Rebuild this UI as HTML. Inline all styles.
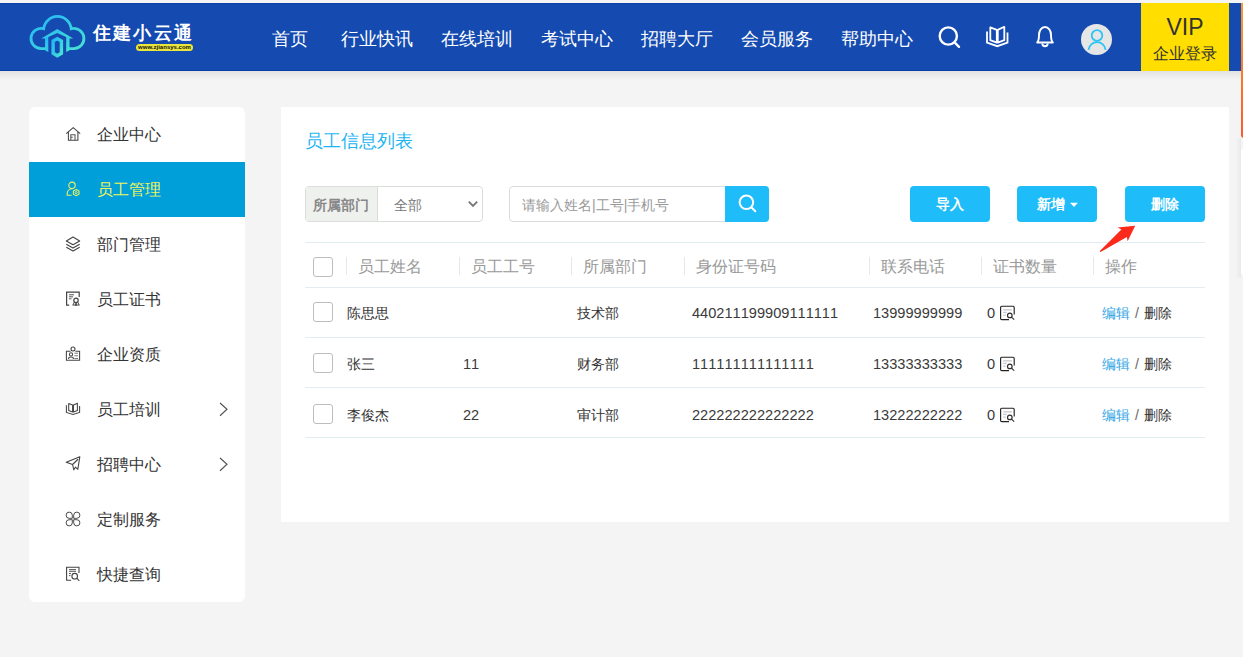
<!DOCTYPE html>
<html><head><meta charset="utf-8">
<style>
*{margin:0;padding:0;box-sizing:border-box}
html,body{width:1243px;height:657px;overflow:hidden;background:#f4f4f4;font-family:"Liberation Sans",sans-serif;color:#333}
.a{position:absolute}
.t{position:absolute;white-space:nowrap}
#hdr{left:0;top:3px;width:1243px;height:68px;background:#154bb0}
#topstrip{left:0;top:0;width:1243px;height:3px;background:#f5f5f5}
#shadow{left:0;top:71px;width:1243px;height:9px;background:linear-gradient(#e2e2e2,#f4f4f4)}
.nav{font-size:18px;color:#fff;top:27px;line-height:24px}
#vip{left:1141px;top:3px;width:88px;height:68px;background:#ffde00}
#side{left:29px;top:107px;width:216px;height:495px;background:#fff;border-radius:6px;overflow:hidden}
.si{position:absolute;left:0;width:216px;height:55px}
.si .tx{position:absolute;left:68px;top:18px;font-size:16px;line-height:20px;color:#333;white-space:nowrap}
.si svg{position:absolute;left:36px;top:19px}
.si.on{background:#009fda}
.si.on .tx{color:#f0f55a}
#main{left:281px;top:107px;width:948px;height:415px;background:#fff}
.hd{font-size:16px;color:#999;line-height:20px}
.sep{position:absolute;width:1px;height:18px;top:257px;background:#e8e8e8}
.hl{position:absolute;left:305px;width:900px;height:1px;background:#e1edf3}
.cb{position:absolute;left:313px;width:20px;height:20px;border:1px solid #bdbdbd;border-radius:3px;background:#fff}
.cell{font-size:14px;color:#333;line-height:18px}
.num{font-size:14.6px;font-kerning:none;color:#3a3a3a}
.btn{position:absolute;top:186px;width:80px;height:36px;background:#1ebcf8;border-radius:4px;color:#fff;font-size:14px;font-weight:bold;text-align:center;line-height:36px}
</style></head><body>
<div class="a" id="topstrip"></div>
<div class="a" id="hdr"></div>
<div class="a" id="shadow"></div>
<div class="a" style="left:0;top:3px;width:1141px;height:1px;background:#0c40aa"></div>
<div class="a" style="left:0;top:70px;width:1141px;height:1px;background:#0a3ca8"></div>

<!-- logo -->
<svg class="a" style="left:26px;top:10px" width="64" height="52" viewBox="0 0 64 52">
<defs><linearGradient id="lg" x1="0" y1="0" x2="1" y2="1"><stop offset="0" stop-color="#22b6f6"/><stop offset="1" stop-color="#48e3d3"/></linearGradient></defs>
<path d="M21 38.6 L15.1 38.6 A10.1 10.1 0 1 1 17.69 18.74 A13.85 13.85 0 0 1 45.21 18.74 A10.1 10.1 0 1 1 47.8 38.6 L42 38.6" fill="none" stroke="url(#lg)" stroke-width="2.8"/>
<path d="M15.3 28.6 L31.25 19 L47.2 28.6 L43.6 28.6 L31.25 22.9 L18.9 28.6 Z" fill="url(#lg)"/>
<path d="M19 27 L22.3 27 L22.3 42 L19 40.3 Z M40.2 27 L43.5 27 L43.5 40.3 L40.2 42 Z" fill="url(#lg)"/>
<path d="M31.25 28.6 L35.4 31 L35.4 43.2 L31.25 45.8 L27.1 43.2 L27.1 31 Z" fill="none" stroke="url(#lg)" stroke-width="3.4"/>
</svg>
<div class="t" style="left:93px;top:21.5px;font-size:18px;font-weight:bold;color:#fff;line-height:22px;letter-spacing:2.2px">住建小云通</div>
<div class="a" style="left:136px;top:44px;width:57px;height:7px;border-radius:4px;background:#ece63c"></div>
<div class="t" style="left:136px;top:44px;width:57px;height:7px;font-size:6px;line-height:7px;font-weight:bold;color:#111;text-align:center">www.zjiansys.com</div>

<!-- nav -->
<div class="t nav" style="left:272px">首页</div>
<div class="t nav" style="left:341px">行业快讯</div>
<div class="t nav" style="left:441px">在线培训</div>
<div class="t nav" style="left:541px">考试中心</div>
<div class="t nav" style="left:641px">招聘大厅</div>
<div class="t nav" style="left:741px">会员服务</div>
<div class="t nav" style="left:841px">帮助中心</div>

<!-- header icons -->
<svg class="a" style="left:935px;top:23px" width="28" height="28" viewBox="0 0 28 28">
<circle cx="13.3" cy="13" r="8.6" fill="none" stroke="#fff" stroke-width="2.4"/>
<path d="M19.6 19.3 L24 23.8" stroke="#fff" stroke-width="2.4" stroke-linecap="round"/>
</svg>
<svg class="a" style="left:984px;top:24px" width="26" height="24" viewBox="0 0 26 24">
<path d="M3 7.6 V18.5 L13.3 22.2 L23.5 18.5 V8.4" fill="none" stroke="#fff" stroke-width="1.8"/>
<path d="M6.3 3.4 L12.8 5.9 V18.6 L6.3 16.2 Z M20.3 2.8 L13.8 5.9 V18.6 L20.3 16.2 Z" fill="none" stroke="#fff" stroke-width="1.8" stroke-linejoin="round"/>
</svg>
<svg class="a" style="left:1034px;top:25px" width="22" height="24" viewBox="0 0 22 24">
<path d="M3.2 17.5 C5 15.5 5 13 5 10 C5 5.5 7.5 2 11 2 C14.5 2 17 5.5 17 10 C17 13 17 15.5 18.8 17.5 Z" fill="none" stroke="#fff" stroke-width="1.9" stroke-linejoin="round"/>
<path d="M8.3 18.5 A2.7 2.7 0 0 0 13.7 18.5" fill="none" stroke="#fff" stroke-width="1.9"/>
</svg>
<div class="a" style="left:1081px;top:24px;width:31px;height:31px;border-radius:50%;background:#e6e6e6"></div>
<svg class="a" style="left:1081px;top:24px" width="31" height="31" viewBox="0 0 31 31">
<circle cx="16" cy="11.5" r="5.3" fill="none" stroke="#2ec4f4" stroke-width="1.8"/>
<path d="M7.5 25.8 A8.6 8.6 0 0 1 24.6 25.8" fill="none" stroke="#2ec4f4" stroke-width="1.8"/>
</svg>
<div class="a" id="vip"></div>
<div class="t" style="left:1141px;top:15px;width:88px;text-align:center;font-size:23px;line-height:24px;color:#333">VIP</div>
<div class="t" style="left:1141px;top:43.5px;width:88px;text-align:center;font-size:16px;line-height:20px;color:#333">企业登录</div>
<div class="a" style="left:1241px;top:3px;width:4px;height:135px;border-radius:0 0 0 3px;background:linear-gradient(#fb9a2a,#fc5a2e)"></div>
<div class="a" style="left:1236px;top:138px;width:5px;height:140px;background:linear-gradient(90deg,#f3f3f3,#e9e9e9)"></div>
<div class="a" style="left:1241px;top:149px;width:4px;height:125px;background:#fff"></div>

<!-- sidebar -->
<div class="a" id="side">
 <div class="si" style="top:0"><svg width="16" height="16" viewBox="0 0 16 16"><path d="M1.2 7.6 L8.2 1.6 L15.2 7.6 M3.4 6 V14.2 H12.9 V6" fill="none" stroke="#444" stroke-width="1.05"/><path d="M5.8 14 V8.8 H10 V13.9 M5.8 11.2 H7.8" fill="none" stroke="#555" stroke-width="1.05"/></svg><div class="tx">企业中心</div></div>
 <div class="si on" style="top:55px"><svg width="16" height="16" viewBox="0 0 16 16"><circle cx="7" cy="4.3" r="3.2" fill="none" stroke="#e9f45c" stroke-width="1.1"/><path d="M6.6 14.3 H2.2 V12.6 C2.2 9.6 4.3 7.8 7.5 7.8" fill="none" stroke="#e9f45c" stroke-width="1.1"/><path d="M11.2 8.5 L14 10 V13.2 L11.2 14.7 L8.4 13.2 V10 Z" fill="none" stroke="#e9f45c" stroke-width="1.1"/><circle cx="11.2" cy="11.6" r="1.1" fill="none" stroke="#e9f45c" stroke-width="0.9"/></svg><div class="tx">员工管理</div></div>
 <div class="si" style="top:110px"><svg width="16" height="16" viewBox="0 0 16 16"><path d="M1.3 5 L8 1 L14.7 5 L8 8.8 Z M1.3 8.2 L8 12 L14.7 8.2 M1.3 11.2 L8 15 L14.7 11.2" fill="none" stroke="#444" stroke-width="1.1" stroke-linejoin="round"/></svg><div class="tx">部门管理</div></div>
 <div class="si" style="top:165px"><svg width="16" height="16" viewBox="0 0 16 16"><path d="M4.2 14.2 H1.6 V1.2 H14.2 V6" fill="none" stroke="#444" stroke-width="1.2"/><path d="M4 3.8 H9 M4 5.8 H8 M4 7.8 H6.5" stroke="#555" stroke-width="1"/><circle cx="11" cy="9.3" r="2.2" fill="none" stroke="#444" stroke-width="1.2"/><path d="M9.4 11 L7.8 14.2 L9.5 13.8 L10.3 14.8 L11 11.8 L11.8 14.8 L12.6 13.8 L14.3 14.2 L12.6 11" fill="none" stroke="#444" stroke-width="1"/></svg><div class="tx">员工证书</div></div>
 <div class="si" style="top:220px"><svg width="16" height="16" viewBox="0 0 16 16"><circle cx="8" cy="2.9" r="2" fill="none" stroke="#444" stroke-width="1.05"/><path d="M5.6 5.2 H1.4 V14.3 H14.6 V5.2 H10.4" fill="none" stroke="#444" stroke-width="1.05"/><circle cx="6" cy="8.4" r="1.6" fill="none" stroke="#444" stroke-width="1.05"/><path d="M3.5 13 C3.5 10.4 8.5 10.4 8.5 13" fill="none" stroke="#444" stroke-width="1.05"/><path d="M9.4 7.2 H13 M9.4 9.8 H13 M9.4 12.5 H13" stroke="#777" stroke-width="1"/></svg><div class="tx">企业资质</div></div>
 <div class="si" style="top:275px"><svg width="16" height="16" viewBox="0 0 16 16"><path d="M1.4 4.3 V11.4 L8 13.4 L14.6 11.4 V5" fill="none" stroke="#444" stroke-width="1.05"/><path d="M3.7 2.4 L7.6 4 V11 L3.7 9.4 Z M12.4 2.2 L8.5 4 V11 L12.4 9.4 Z" fill="none" stroke="#444" stroke-width="1.05" stroke-linejoin="round"/></svg><div class="tx">员工培训</div>
   <svg style="left:190px;top:20px" width="10" height="16" viewBox="0 0 10 16"><path d="M1 1 L8 7.3 L1 13.8" fill="none" stroke="#555" stroke-width="1.2"/></svg></div>
 <div class="si" style="top:330px"><svg width="16" height="16" viewBox="0 0 16 16"><path d="M1.2 6.2 L14.8 0.8 L12.8 13.3 L10.4 11.2 L8.8 13.8 L7.6 8.5 L12.7 3.5 L7.6 8.5 Z M7.6 8.5 L1.2 6.2" fill="none" stroke="#444" stroke-width="1.1" stroke-linejoin="round"/></svg><div class="tx">招聘中心</div>
   <svg style="left:190px;top:20px" width="10" height="16" viewBox="0 0 10 16"><path d="M1 1 L8 7.3 L1 13.8" fill="none" stroke="#555" stroke-width="1.2"/></svg></div>
 <div class="si" style="top:385px"><svg width="16" height="16" viewBox="0 0 16 16"><path d="M7.3 7.3 V4.1 A3.1 3.1 0 1 0 4.1 7.3 Z M8.7 7.3 V4.1 A3.1 3.1 0 1 1 11.9 7.3 Z M7.3 8.7 V11.9 A3.1 3.1 0 1 1 4.1 8.7 Z M8.7 8.7 V11.9 A3.1 3.1 0 1 0 11.9 8.7 Z" fill="none" stroke="#4a4a4a" stroke-width="1"/></svg><div class="tx">定制服务</div></div>
 <div class="si" style="top:440px"><svg width="16" height="16" viewBox="0 0 16 16"><path d="M6.2 14.2 H1.6 V1.2 H14 V7" fill="none" stroke="#444" stroke-width="1.1"/><path d="M4 3.6 H11 M4 5.3 H11 M4 7.5 H6 M4 9.6 H5.5" stroke="#555" stroke-width="1"/><circle cx="9.7" cy="10.2" r="2.8" fill="none" stroke="#444" stroke-width="1.1"/><path d="M11.7 12.2 L14.3 14.8" stroke="#444" stroke-width="1.1"/></svg><div class="tx">快捷查询</div></div>
</div>

<!-- main panel -->
<div class="a" id="main"></div>
<div class="t" style="left:305px;top:130px;font-size:18px;line-height:22px;color:#1db5f1">员工信息列表</div>

<!-- filter -->
<div class="a" style="left:305px;top:186px;width:178px;height:36px;border:1px solid #dcdcdc;border-radius:4px;background:#fff"></div>
<div class="a" style="left:306px;top:187px;width:72px;height:34px;background:#eff1ef;border-right:1px solid #dcdcdc;border-radius:3px 0 0 3px"></div>
<div class="t" style="left:313px;top:196px;font-size:14px;line-height:18px;font-weight:bold;color:#888">所属部门</div>
<div class="t" style="left:394px;top:196px;font-size:14px;line-height:18px;color:#777">全部</div>
<svg class="a" style="left:467px;top:199px" width="12" height="10" viewBox="0 0 12 10"><path d="M1.8 2.6 L6 6.8 L10.2 2.6" fill="none" stroke="#777" stroke-width="1.9"/></svg>
<div class="a" style="left:509px;top:186px;width:260px;height:36px;border:1px solid #dcdcdc;border-radius:4px;background:#fff"></div>
<div class="t" style="left:522px;top:196px;font-size:14px;line-height:18px;color:#999">请输入姓名|工号|手机号</div>
<div class="a" style="left:725px;top:186px;width:44px;height:36px;background:#1ebcf8;border-radius:0 4px 4px 0"></div>
<svg class="a" style="left:733px;top:191px" width="28" height="26" viewBox="0 0 28 26">
<circle cx="13.4" cy="11.3" r="6.8" fill="none" stroke="#fff" stroke-width="2"/>
<path d="M18.3 16.3 L22.3 20.3" stroke="#fff" stroke-width="2" stroke-linecap="round"/>
</svg>

<div class="btn" style="left:910px">导入</div>
<div class="btn" style="left:1017px;text-align:left;padding-left:20px">新增</div>
<svg class="a" style="left:1069px;top:202px" width="10" height="6" viewBox="0 0 10 6"><path d="M1 0.8 H9 L5 5 Z" fill="#fff"/></svg>
<div class="btn" style="left:1125px">删除</div>

<!-- table -->
<div class="hl" style="top:242px"></div>
<div class="hl" style="top:287px"></div>
<div class="hl" style="top:337px"></div>
<div class="hl" style="top:387px"></div>
<div class="hl" style="top:437px"></div>
<div class="cb" style="top:257px"></div>
<div class="sep" style="left:346px"></div>
<div class="sep" style="left:459px"></div>
<div class="sep" style="left:571px"></div>
<div class="sep" style="left:684px"></div>
<div class="sep" style="left:869px"></div>
<div class="sep" style="left:981px"></div>
<div class="sep" style="left:1093px"></div>
<div class="t hd" style="left:358px;top:257px">员工姓名</div>
<div class="t hd" style="left:471px;top:257px">员工工号</div>
<div class="t hd" style="left:583px;top:257px">所属部门</div>
<div class="t hd" style="left:696px;top:257px">身份证号码</div>
<div class="t hd" style="left:881px;top:257px">联系电话</div>
<div class="t hd" style="left:993px;top:257px">证书数量</div>
<div class="t hd" style="left:1105px;top:257px">操作</div>

<div class="cb" style="top:302px"></div>
<div class="t cell" style="left:347px;top:304px">陈思思</div>
<div class="t cell" style="left:577px;top:304px">技术部</div>
<div class="t cell num" style="left:692px;top:304px">440211199909111111</div>
<div class="t cell num" style="left:873px;top:304px">13999999999</div>
<div class="t cell num" style="left:987px;top:304px">0</div>
<div class="t cell" style="left:1102px;top:304px"><span style="color:#33a6e6">编辑</span><span style="color:#666;margin:0 5px 0 5px">/</span>删除</div>

<div class="cb" style="top:353px"></div>
<div class="t cell" style="left:347px;top:355px">张三</div>
<div class="t cell num" style="left:463px;top:355px">11</div>
<div class="t cell" style="left:577px;top:355px">财务部</div>
<div class="t cell num" style="left:692px;top:355px">111111111111111</div>
<div class="t cell num" style="left:873px;top:355px">13333333333</div>
<div class="t cell num" style="left:987px;top:355px">0</div>
<div class="t cell" style="left:1102px;top:355px"><span style="color:#33a6e6">编辑</span><span style="color:#666;margin:0 5px 0 5px">/</span>删除</div>

<div class="cb" style="top:404px"></div>
<div class="t cell" style="left:347px;top:406px">李俊杰</div>
<div class="t cell num" style="left:463px;top:406px">22</div>
<div class="t cell" style="left:577px;top:406px">审计部</div>
<div class="t cell num" style="left:692px;top:406px">222222222222222</div>
<div class="t cell num" style="left:873px;top:406px">13222222222</div>
<div class="t cell num" style="left:987px;top:406px">0</div>
<div class="t cell" style="left:1102px;top:406px"><span style="color:#33a6e6">编辑</span><span style="color:#666;margin:0 5px 0 5px">/</span>删除</div>

<!-- red arrow -->
<svg class="a" style="left:1095px;top:220px" width="45" height="35" viewBox="0 0 45 35">
<path d="M4.6 31.2 L26.4 9.4 L22.6 7.4 L40.2 5.7 L32.6 21.2 L31.9 16.9 L5.6 31.9 Z" fill="#fc2a1c"/>
</svg>
<!-- cert icons -->
<svg class="a" style="left:999px;top:305px" width="17" height="16" viewBox="0 0 17 16"><path d="M10 14.6 H2.8 A1.2 1.2 0 0 1 1.6 13.4 V2.4 A1.2 1.2 0 0 1 2.8 1.2 H14 A1.2 1.2 0 0 1 15.2 2.4 V9.4" fill="none" stroke="#222" stroke-width="1.15"/><path d="M4.2 4.9 H12.8 M4.2 7.3 H7.6 M4.2 10.2 H6.7" stroke="#c5c5cd" stroke-width="1.3"/><circle cx="10.8" cy="10.4" r="2.3" fill="none" stroke="#333" stroke-width="1.2"/><path d="M12.5 12.1 L15.2 14.6" stroke="#333" stroke-width="1.2"/></svg>
<svg class="a" style="left:999px;top:356px" width="17" height="16" viewBox="0 0 17 16"><path d="M10 14.6 H2.8 A1.2 1.2 0 0 1 1.6 13.4 V2.4 A1.2 1.2 0 0 1 2.8 1.2 H14 A1.2 1.2 0 0 1 15.2 2.4 V9.4" fill="none" stroke="#222" stroke-width="1.15"/><path d="M4.2 4.9 H12.8 M4.2 7.3 H7.6 M4.2 10.2 H6.7" stroke="#c5c5cd" stroke-width="1.3"/><circle cx="10.8" cy="10.4" r="2.3" fill="none" stroke="#333" stroke-width="1.2"/><path d="M12.5 12.1 L15.2 14.6" stroke="#333" stroke-width="1.2"/></svg>
<svg class="a" style="left:999px;top:407px" width="17" height="16" viewBox="0 0 17 16"><path d="M10 14.6 H2.8 A1.2 1.2 0 0 1 1.6 13.4 V2.4 A1.2 1.2 0 0 1 2.8 1.2 H14 A1.2 1.2 0 0 1 15.2 2.4 V9.4" fill="none" stroke="#222" stroke-width="1.15"/><path d="M4.2 4.9 H12.8 M4.2 7.3 H7.6 M4.2 10.2 H6.7" stroke="#c5c5cd" stroke-width="1.3"/><circle cx="10.8" cy="10.4" r="2.3" fill="none" stroke="#333" stroke-width="1.2"/><path d="M12.5 12.1 L15.2 14.6" stroke="#333" stroke-width="1.2"/></svg>
</body></html>
